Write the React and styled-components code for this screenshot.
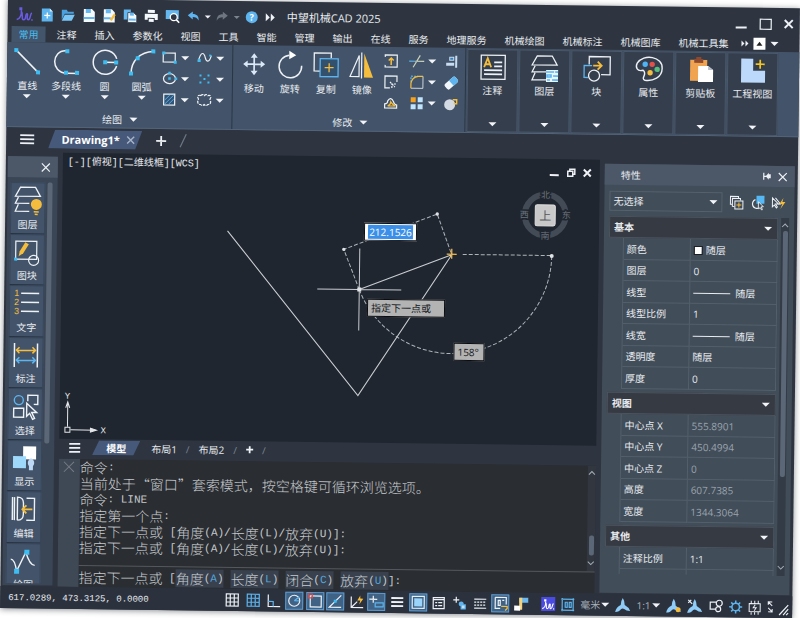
import React, { useState } from 'react';
import styled, { createGlobalStyle, css } from 'styled-components';

const GlobalStyle = createGlobalStyle`
  * {
    box-sizing: border-box;
  }

  body {
    margin: 0;
    background: #fff;
    font-family: 'Open Sans', 'Noto Sans CJK SC', sans-serif;
    font-size: 10px;
    line-height: 14px;
    color: #e8ebef;
  }

  #root {
    display: flow-root;
    height: 100vh;
    overflow: hidden;
  }

  button,
  input,
  select {
    margin: 0;
    padding: 0;
    border: 0;
    background: none;
    color: inherit;
    font: inherit;
  }

  svg {
    display: block;
    flex: none;
    overflow: visible;
  }
`;

const blue = '#3dbdf2';
const sky = '#5db4ee';
const gold = '#f5bd3d';
const white = '#eef2f6';

/* ---------- shell ---------- */

const Window = styled.main`
  display: flex;
  flex-direction: column;
  width: calc(100vw - 8px);
  height: calc(100vh - 8px);
  margin: -2px 0 0 8px;
  background: #2e3540;
  box-shadow: 0 1px 6px #8a8d92;
  transform: rotate(0.74deg);
  transform-origin: 0 0;
`;

const Row = styled.div`
  display: flex;
  align-items: center;
`;

const IconButton = styled.button`
  display: flex;
  align-items: center;
  justify-content: center;
`;

const Caret = styled.i`
  flex: none;
  width: 0;
  height: 0;
  margin: ${({ $small }) => ($small ? '0 -2px' : 0)};
  border: solid transparent;
  border-width: ${({ $small }) => ($small ? '3px 3px 0' : '4px 4px 0')};
  border-top-color: ${({ color }) => color || '#f2f4f7'};
`;

/* ---------- title bar ---------- */

const TitleBar = styled.header`
  display: flex;
  align-items: center;
  flex: none;
  height: 28px;
  padding: 4px 7px 0 9px;
`;

const QuickAccess = styled(Row)`
  gap: 8px;
`;

const Title = styled.h1`
  margin: 0 auto 0 12px;
  font-size: 11px;
  font-weight: 400;
  line-height: 16px;
`;

const WindowButtons = styled(Row)`
  gap: 13px;
`;

/* ---------- ribbon ---------- */

const RibbonTabs = styled.nav`
  display: flex;
  flex: none;
  align-items: center;
  height: 16px;
  padding-left: 2px;
`;

const RibbonTab = styled.button`
  flex: none;
  height: 16px;
  margin: 0 2px;
  padding: 0 7px;
  line-height: 15px;
  ${({ $active }) =>
    $active &&
    css`
      background: #43556b;
      color: #45bdf0;
    `}
`;

const RibbonToggles = styled(Row)`
  gap: 5px;
  margin-left: 4px;
`;

const ToggleBox = styled.button`
  display: flex;
  align-items: center;
  justify-content: center;
  width: 12px;
  height: 12px;
  background: #fff;
`;

const Ribbon = styled.section`
  display: flex;
  flex: none;
  height: 85px;
  background: #43546a;
  border-bottom: 1px solid #526379;
`;

const RibbonGroup = styled.div`
  display: flex;
  flex-direction: column;
  justify-content: space-between;
  width: ${({ $width }) => $width}px;
  padding: ${({ $inset }) => `6px 0 1px ${$inset}px`};
  border-right: 1px solid #2b3644;
`;

const Tools = styled.div`
  display: flex;
  align-items: flex-start;
`;

const Tool = styled.button`
  display: flex;
  flex-direction: column;
  align-items: center;
  width: ${({ $wide }) => ($wide ? 40 : 36)}px;
  white-space: nowrap;

  span {
    margin: 4px 0 2px;
  }
`;

const SmallTools = styled.div`
  display: grid;
  grid-template-columns: ${({ $columns }) => $columns};
  grid-auto-rows: 21px;
  margin: -3px 0 0 ${({ $left }) => $left}px;
`;

const SmallTool = styled.button`
  display: flex;
  align-items: center;
  gap: 4px;
`;

const GroupTitle = styled.button`
  display: flex;
  align-items: center;
  justify-content: center;
  gap: 7px;
`;

const Card = styled.button`
  display: flex;
  flex-direction: column;
  align-items: center;
  width: 51px;
  margin: 1px 0 0 1px;
  padding: 4px 0 5px;
  background: #343e4d;
  border: 1px solid #4a586b;
  white-space: nowrap;

  span {
    margin: 3px 0 auto;
  }
`;

/* ---------- tabs ---------- */

const DocTabs = styled.nav`
  display: flex;
  align-items: center;
  flex: none;
  gap: 14px;
  height: 25px;
  padding: 0 0 2px 14px;
`;

const SlantTab = styled.div`
  display: flex;
  align-items: center;
  justify-content: center;
  gap: 7px;
  width: ${({ $width }) => $width}px;
  height: ${({ $height }) => $height}px;
  background: #46597b;
  clip-path: polygon(7px 0, 100% 0, calc(100% - 7px) 100%, 0 100%);
  color: #fff;
  font-weight: 700;
`;

const DocName = styled.button`
  padding-left: 5px;
  font-size: 11px;
`;

const LayoutTabs = styled.nav`
  display: flex;
  align-items: center;
  flex: none;
  gap: 9px;
  height: 20px;
  padding: 0 10px 3px;

  ${SlantTab} {
    margin: 0 2px 0 3px;
  }
`;

const Slash = styled.span`
  color: #7b8592;
`;

/* ---------- body ---------- */

const Body = styled.div`
  display: flex;
  flex: 1;
  min-height: 0;
`;

const PanelHead = styled.div`
  display: flex;
  align-items: center;
  justify-content: flex-end;
  flex: none;
  gap: 7px;
  height: 21px;
  padding: ${({ $pad }) => $pad};
  background: #4c5767;

  h2 {
    margin: 0 auto 0 0;
    font-size: 10px;
    font-weight: 400;
  }
`;

const SidePanel = styled.aside`
  display: flex;
  flex-direction: column;
  flex: none;
  width: 50px;
  margin: 4px 5px 1px 2px;
  background: #3a4655;
`;

const SideScroll = styled.div`
  display: flex;
  flex: 1;
  min-height: 0;
  padding: 5px 5px 2px 3px;
  gap: 2px;
`;

const SideList = styled.div`
  flex: 1;
  overflow: hidden;
  background: #43546a;
`;

const SideItem = styled.button`
  display: flex;
  flex-direction: column;
  align-items: center;
  justify-content: space-between;
  width: 100%;
  height: 51px;
  padding: 3px 0 2px;
  border: 1px solid #37465a;
  border-bottom-color: #283341;

  &:nth-child(odd) {
    height: 52px;
  }
`;

const Thumb = styled.div`
  flex: none;
  width: 5px;
  height: ${({ $height }) => $height};
  background: #5b6776;
  border-radius: 2px;
`;

const Center = styled.div`
  display: flex;
  flex: 1;
  flex-direction: column;
  min-width: 0;
`;

/* ---------- drawing area ---------- */

const Canvas = styled.section`
  position: relative;
  flex: 1;
  min-height: 0;
  margin-right: 3px;
  overflow: hidden;
  background: #20262f;
`;

const Scene = styled.svg`
  position: absolute;
  inset: 0;
`;

const ViewLabel = styled.div`
  position: absolute;
  top: 3px;
  left: 5px;
  font-family: 'Liberation Mono', 'Noto Sans CJK SC', monospace;
`;

const ViewButtons = styled(Row)`
  position: absolute;
  top: 9px;
  right: 9px;
  gap: 8px;
`;

const DistanceBox = styled.label`
  position: absolute;
  left: 302px;
  top: 66px;
  width: 53px;
  height: 18px;
  padding: 1px 3px;
  background: #fff;
  border: 1px solid #0c0f13;

  input {
    display: block;
    width: 100%;
    height: 14px;
    background: #3b8fe8;
    color: #fff;
    text-align: center;
  }
`;

const Hint = styled.div`
  position: absolute;
  left: ${({ $left }) => $left}px;
  top: ${({ $top }) => $top}px;
  width: ${({ $width }) => $width}px;
  height: 18px;
  padding: 1px 3px;
  background: #b3b3b3;
  border: 1px solid #0a0c0f;
  color: #15181c;
`;

/* ---------- command line ---------- */

const Command = styled.section`
  display: flex;
  flex: none;
  height: 128px;
  margin-right: 3px;
  background: #2a2d31;
  color: #c6cacf;
  font-family: 'Noto Sans CJK SC', sans-serif;
  font-size: 14px;
  font-weight: 300;
`;

const CommandStrip = styled.div`
  flex: none;
  width: 21px;
  padding: 3px 5px;
  background: #3f4855;
`;

const CommandBody = styled.div`
  display: flex;
  flex: 1;
  flex-direction: column;
  min-width: 0;
`;

const History = styled.div`
  display: flex;
  flex: 1;
  justify-content: space-between;
  min-height: 0;
  line-height: 16px;
  white-space: nowrap;

  p {
    display: flex;
    align-items: center;
    height: 16px;
    margin: 0;
  }
`;

const Mono = styled.span`
  font-family: 'Liberation Mono', monospace;
  font-size: 11px;
  font-weight: 400;
  white-space: pre;
`;

const Prompt = styled.label`
  display: flex;
  align-items: center;
  flex: none;
  height: 22px;
  border-top: 1px solid #55595f;
  line-height: 18px;
  white-space: nowrap;

  input {
    flex: 1;
    min-width: 0;
    outline: none;
  }
`;

const Option = styled.button`
  display: flex;
  align-items: center;
  height: 18px;
  margin-right: ${({ $last }) => ($last ? 0 : 7)}px;
  background: #38414d;
  line-height: 18px;

  b {
    color: #53a4dd;
    font-weight: 400;
  }
`;

const ScrollTrack = styled.div`
  display: flex;
  flex: none;
  flex-direction: column;
  align-items: center;
  gap: 6px;
  width: 8px;
  padding: 6px 0;
  background: #31363f;

  :first-child {
    margin-bottom: auto;
  }
`;

/* ---------- properties ---------- */

const Properties = styled.aside`
  display: flex;
  flex-direction: column;
  flex: none;
  width: 190px;
  margin: 4px 3px 1px 2px;
  background: #414d59;
`;

const Picker = styled(Row)`
  flex: none;
  gap: 7px;
  padding: 6px 9px 5px 5px;
`;

const SelectBox = styled.label`
  display: flex;
  align-items: center;
  flex: 1;
  height: 20px;
  padding: 0 4px 0 3px;
  border: 1px solid #55616d;

  select {
    flex: 1;
    appearance: none;
  }
`;

const PropScroll = styled.div`
  display: flex;
  flex: 1;
  min-height: 0;
  gap: 3px;
  margin: 0 5px 19px;
`;

const PropGroups = styled.div`
  flex: 1;
  overflow: hidden;
`;

const GroupHead = styled.button`
  display: flex;
  align-items: center;
  justify-content: space-between;
  width: 100%;
  height: 22px;
  padding: 0 5px 0 4px;
  background: #363a42;
  border: 1px solid #4b535e;
  font-weight: 700;
`;

const PropTable = styled.table`
  width: calc(100% - 14px);
  margin: 0 0 3px 14px;
  border-collapse: separate;
  border-spacing: 0;
  border-left: 1px solid #53606c;
  table-layout: fixed;

  tr {
    height: 21px;
  }

  tr:nth-child(odd) {
    height: 22px;
  }

  th,
  td {
    padding: 0 3px;
    border: solid #53606c;
    border-width: 0 1px 1px 0;
    font-weight: 400;
    text-align: left;
  }

  th {
    width: 67px;
  }

  td {
    color: ${({ $muted }) => ($muted ? '#9aa3ad' : 'inherit')};
  }
`;

const Swatch = styled.i`
  display: inline-block;
  width: 7px;
  height: 7px;
  margin: 0 4px 0 1px;
  background: #fff;
  outline: 1px solid #1c2026;
`;

const Stroke = styled.i`
  display: inline-block;
  width: 37px;
  height: 1px;
  margin-right: 5px;
  background: #e8ebef;
  vertical-align: middle;
`;

const PropTrack = styled.div`
  display: flex;
  flex: none;
  flex-direction: column;
  align-items: center;
  gap: 3px;
  width: 8px;
  padding: 6px 0;
  background: #333b46;

  :last-child {
    margin-top: auto;
  }
`;

/* ---------- status bar ---------- */

const StatusBar = styled.footer`
  display: flex;
  align-items: center;
  flex: none;
  height: 22px;
  padding: 0 2px 0 8px;
  background: #2b323e;
`;

const Coords = styled.output`
  flex: none;
  width: 215px;
  padding-top: 2px;
  font-family: 'Liberation Mono', monospace;
  font-size: 9px;
  white-space: pre;
`;

const Modes = styled(Row)`
  flex: 0 0 307px;
  justify-content: space-between;
`;

const Mode = styled.button`
  display: flex;
  align-items: center;
  justify-content: center;
  width: 18px;
  height: 18px;
  ${({ $on }) =>
    $on &&
    css`
      background: #3f6285;
      border: 1px solid #5c9bd0;
    `}
`;

const StatusEnd = styled(Row)`
  flex: 1;
  justify-content: space-between;
  margin: 0 2px 0 11px;
`;

const StatusSelect = styled.label`
  display: flex;
  align-items: center;
  gap: 1px;
  color: #a9b1ba;

  select {
    appearance: none;
  }
`;

const AppBadge = styled(IconButton)`
  width: 14px;
  height: 14px;
  background: #4a4be0;
`;

/* ---------- drawings ---------- */

const Icon = ({ w = 16, h = w, children, stroke = white, sw = 1.2 }) => (
  <svg
    width={w}
    height={h}
    viewBox={`0 0 ${w} ${h}`}
    fill="none"
    stroke={stroke}
    strokeWidth={sw}
    aria-hidden="true"
  >
    {children}
  </svg>
);

const Dot = ({ x, y, s = 4 }) => (
  <rect x={x - s / 2} y={y - s / 2} width={s} height={s} fill={blue} stroke="none" />
);

const Close = ({ size = 8, color = white, sw = 1.4 }) => (
  <Icon w={size} stroke={color} sw={sw}>
    <path d={`M0 0L${size} ${size}M${size} 0L0 ${size}`} />
  </Icon>
);

const Plus = ({ size = 10 }) => (
  <Icon w={size} sw={1.8}>
    <path d={`M0 ${size / 2}H${size}M${size / 2} 0V${size}`} />
  </Icon>
);

const Menu = ({ w = 14 }) => (
  <Icon w={w} h={10} sw={1.8}>
    <path d={`M0 1H${w}M0 5H${w}M0 9H${w}`} />
  </Icon>
);

const Chevron = ({ down }) => (
  <Icon w={6} h={4} stroke="#a4adb7" sw={1}>
    <path d={down ? 'M0 0l3 3 3-3' : 'M0 3l3-3 3 3'} />
  </Icon>
);

const Logo = ({ color = '#6a5be0', w = 16, h = 14 }) => (
  <svg width={w} height={h} viewBox="0 0 16 14" fill="none" stroke={color} strokeWidth="1.5">
    <path d="M0 12.500C3 12 5 8 4.500 3M4.500 4C7 7 4 12.500 7 12.500S8 7 10 6.500s-1 6 1.500 6S13 7 15 5.500" />
    <path d="M2.500 0h3v3h-3zM14.500 12h1.500v1.500h-1.500z" fill={color} stroke="none" />
  </svg>
);

const quickIcons = {
  新建: (
    <Icon w={13} stroke="none">
      <path d="M1 0h8l3 3v10H1z" fill={sky} />
      <path d="M9 0v3h3z" fill="#d6edfc" />
      <path d="M6.500 4v6M3.500 7h6" stroke="#fff" strokeWidth="1.300" />
    </Icon>
  ),
  打开: (
    <Icon w={13} stroke="none">
      <path d="M0 1h5l1 2h6v2H3l-3 6z" fill="#4ba1dd" />
      <path d="M3 6h10l-3 6H0z" fill="#79c6f7" />
    </Icon>
  ),
  保存: (
    <Icon w={12} h={13} stroke="none">
      <path d="M1 0h8l3 3v10H1z" fill="#f4f9fd" />
      <path d="M3 0h5v4H3zM1 8h11v2H1z" fill="#65b8ef" />
    </Icon>
  ),
  另存为: (
    <Icon w={13} stroke="none">
      <path d="M1 0h8l3 3v10H1z" fill="#f4f9fd" />
      <path d="M3 0h5v4H3zM1 8h7v2H1z" fill="#65b8ef" />
      <path d="M8 11l4-6" stroke={gold} strokeWidth="2.400" />
    </Icon>
  ),
  全部保存: (
    <Icon w={13} stroke="none">
      <path d="M0 0h7v10H0z" fill="#65b8ef" />
      <path d="M4 3h6l3 3v7H4z" fill="#f4f9fd" stroke="#2e3540" strokeWidth=".8" />
      <path d="M6 3h4v3H6zM5 9h7v2H5z" fill="#65b8ef" />
    </Icon>
  ),
  打印: (
    <Icon w={13} stroke="none">
      <path d="M3 0h7v3H3zM0 4h13v6h-3V8H3v2H0z" fill="#f4f9fd" />
      <path d="M4 9h5v3H4z" fill="#f4f9fd" />
    </Icon>
  ),
  预览: (
    <Icon w={14} h={13} stroke="none">
      <path d="M0 0h13v9H0z" fill="#65b8ef" />
      <circle cx="8" cy="7" r="3.500" fill="#2e3540" stroke="#fff" strokeWidth="1.300" />
      <path d="M10.500 9.500l3 3" stroke="#fff" strokeWidth="1.600" />
    </Icon>
  ),
};

const Undo = ({ color, flip }) => (
  <svg width="11" height="10" viewBox="0 0 11 10" fill={color}>
    <path
      d="M0 4l5-4v2.600c4 0 6 2 6 6.400C9.500 6.500 8 5.600 5 5.600V8z"
      transform={flip ? 'translate(11 0) scale(-1 1)' : undefined}
    />
  </svg>
);

const LineIcon = () => (
  <Icon w={26} sw={1.5}>
    <path d="M2 2L24 24" />
    <Dot x={2} y={2} />
    <Dot x={24} y={24} />
  </Icon>
);

const PolylineIcon = () => (
  <Icon w={26} sw={1.5}>
    <path d="M14 2C5 1 1.500 8 1.500 13S5 24.500 14 24.500H25" />
    <Dot x={14} y={2.5} />
    <Dot x={13} y={24} />
    <Dot x={24} y={24} />
  </Icon>
);

const CircleIcon = () => (
  <Icon w={26} sw={1.5}>
    <path d="M24.500 9.500A12 12 0 1 0 24.500 16.500" />
    <path d="M13 13h12" />
    <Dot x={13} y={13} />
    <Dot x={24} y={13} />
  </Icon>
);

const ArcIcon = () => (
  <Icon w={26} sw={1.5}>
    <path d="M2 24C2 11 11 2 24 1.500" />
    <Dot x={2} y={24} />
    <Dot x={8.5} y={8.5} />
    <Dot x={24} y={1.5} />
  </Icon>
);

const MoveIcon = () => (
  <Icon w={26} sw={1.7} stroke="#dbe8f8">
    <path d="M13 4v18M4 13h18" />
    <path
      d="M13 2l3.500 4.500h-7zM13 24l3.500-4.500h-7zM2 13l4.500-3.500v7zM24 13l-4.500-3.500v7z"
      fill="#dbe8f8"
      stroke="none"
    />
  </Icon>
);

const RotateIcon = () => (
  <Icon w={26} sw={1.5}>
    <path d="M12 3.500A11.300 11.300 0 1 0 24.500 14" />
    <path d="M12-1l7 4.500-7 4z" fill="#fff" stroke="none" />
  </Icon>
);

const CopyIcon = () => (
  <Icon w={26} sw={1.3}>
    <path d="M7 19H1V1h17v5" />
    <rect x="7" y="6.500" width="18" height="18" stroke={sky} fill="#33506d" />
    <path d="M16 11v9M11.500 15.500h9" stroke={gold} />
  </Icon>
);

const MirrorIcon = () => (
  <Icon w={26}>
    <path d="M10 3v21H1z" />
    <path d="M12.500 0v26" />
    <path d="M15 1v24h9z" fill={gold} stroke="none" />
  </Icon>
);

const drawSmall = [
  <Icon w={15} key="rect">
    <rect x="1" y="3" width="12" height="9" />
    <Dot x={1.5} y={3} s={3} />
    <Dot x={13} y={12} s={3} />
  </Icon>,
  <Icon w={15} key="spline">
    <path d="M1 11C4-1 7 3 8 7s4 6 6-2" />
    <Dot x={2} y={10} s={3} />
    <Dot x={13} y={5} s={2} />
  </Icon>,
  <Icon w={15} key="ellipse">
    <ellipse cx="7.500" cy="7.500" rx="6" ry="5" />
    <Dot x={7.5} y={7.5} s={2.5} />
    <Dot x={14} y={7.5} s={2.5} />
    <Dot x={7.5} y={2} s={2.5} />
  </Icon>,
  <Icon w={15} key="points">
    <Dot x={3.5} y={4} s={2} />
    <Dot x={11.5} y={4} s={2} />
    <Dot x={7.5} y={7.5} s={2} />
    <Dot x={3.5} y={11} s={2} />
    <Dot x={11.5} y={11} s={2} />
  </Icon>,
  <Icon w={15} key="hatch">
    <rect x="2" y="2" width="11" height="11" fill="#315477" />
    <path d="M3 8l5-5M3 12l9-9M7 12l5-5" stroke={sky} strokeWidth=".9" />
  </Icon>,
  <Icon w={15} key="cloud">
    <path
      d="M4 3q2-2 3.500 0 2-2 3.500 0 3-1 3 2-1.500 2 0 4 0 3-3 3-1.500 2-3.500 0-2 2-3.500 0-3 0-3-3 1.500-2 0-4 0-3 3-2z"
      strokeDasharray="3 1"
    />
  </Icon>,
];

const modifySmall = [
  <Icon w={14} key="stretch">
    <path d="M1 3V1h12v12H1v-2" />
    <path d="M7 11V4M4.500 6.500L7 4l2.500 2.500" stroke={gold} strokeWidth="1.500" />
  </Icon>,
  <Icon w={15} key="trim">
    <path d="M0 8h6" stroke={sky} />
    <path d="M6 8h9M11 2L4 14" stroke="#c9d3bb" />
  </Icon>,
  <Icon w={14} key="align" stroke="none">
    <path d="M11 1h2v12h-2zM5 2h5v4H5zM2 8h8v3H2z" fill="#c8dcf2" />
    <path d="M6 3h3v2H6z" fill="#377fb9" />
  </Icon>,
  <Icon w={14} key="scale">
    <path d="M6 13H1V1h12v6" />
    <path d="M6 7l5 5M8 13v-4h5" strokeDasharray="2 1" />
  </Icon>,
  <Icon w={15} key="fillet">
    <path d="M2 8V2h7" stroke={sky} strokeDasharray="2 1" />
    <path d="M2 14h12V2" strokeWidth=".8" />
    <path d="M2 14V9Q3 3 9 2h5" stroke={gold} />
  </Icon>,
  <Icon w={14} key="erase" stroke="none">
    <g transform="rotate(-42 7 7)">
      <rect x="0" y="4" width="14" height="7" rx="2" fill="#f1f6fb" />
      <path d="M7 4h5q2 0 2 2v3q0 2-2 2H7z" fill={sky} />
    </g>
  </Icon>,
  <Icon w={14} key="offset">
    <path d="M1 12V8q3 0 3-3 3-5 6 1 0 2 3 3v3z" />
    <path d="M4 10q3-1 3-4 2 3 5 4z" stroke={gold} fill="#6b5b34" />
  </Icon>,
  <Icon w={15} key="array" stroke="none">
    <path d="M2 2h5v5H2z" fill="#f6a21c" />
    <path d="M9 2h5v5H9zM2 9h5v5H2zM9 9h5v5H9z" fill="#bfe4fb" />
  </Icon>,
  <Icon w={14} key="explode" stroke="none">
    <circle cx="6" cy="8" r="5.500" fill="#d4dae3" />
    <path d="M9 3h4v4h-3" stroke={gold} strokeWidth="1.400" />
  </Icon>,
];

const LayerStack = ({ h = 26, children }) => (
  <Icon w={28} h={h} sw={1.3}>
    <path d="M6 1h15l5 9H1z" fill="none" />
    <path d="M4 11l-3 6h14M4 18l-3 7h14" />
    {children}
  </Icon>
);

const cards = [
  [
    '注释',
    <Icon w={26} key="note" sw={1.3}>
      <rect x="1" y="1" width="24" height="24" />
      <path d="M4 13L7.500 4 11 13M5.500 10h4" stroke={gold} strokeWidth="1.800" />
      <path d="M14 8h8M14 12h8M4 16h18M4 20h18" strokeWidth="1.700" />
    </Icon>,
  ],
  [
    '图层',
    <LayerStack key="layers">
      <rect x="15" y="15" width="12" height="12" fill="#e9f6fe" stroke="none" />
      <path d="M15 17h8M24 17h3M16 20h4v2h-4zM22 21h5M16 25h3M21 25h6" stroke={sky} strokeWidth="1.600" />
    </LayerStack>,
  ],
  [
    '块',
    <Icon w={28} h={26} key="block" sw={1.3}>
      <path d="M6 9V1h21v18h-9" />
      <path d="M9 10H1v12h4" stroke={sky} />
      <circle cx="11" cy="20" r="5.500" />
      <path d="M10 10h8M14.500 6l4 4-4 4" stroke={gold} strokeWidth="1.800" />
    </Icon>,
  ],
  [
    '属性',
    <Icon w={28} h={26} key="palette" sw={1.4}>
      <path d="M8 14C2 16 0 11 2 7 8-3 28 0 27 12c0 9-9 13-17 12-5-2 3-6-2-10z" />
      <g stroke="none">
        <circle cx="10" cy="8" r="2.700" fill="#4fb4f4" />
        <circle cx="17" cy="8" r="2.700" fill="#e1514c" />
        <circle cx="22" cy="13" r="2.700" fill="#58bd7f" />
        <circle cx="15" cy="16.500" r="2.700" fill={gold} />
      </g>
    </Icon>,
  ],
  [
    '剪贴板',
    <Icon w={26} key="paste" stroke="none">
      <path d="M2 3h17v21H2z" fill="#f0a452" />
      <path d="M6 2h2V0h5v2h2v4H6z" fill="#8e4a2f" />
      <path d="M10 9h10l5 4v12H10z" fill="#fff" />
      <path d="M20 9v4h5z" fill="#b7bdc6" />
    </Icon>,
  ],
  [
    '工程视图',
    <Icon w={26} key="view" stroke="none">
      <path d="M1 1h12v12h12v12H1z" fill="#bcd9fb" />
      <path d="M20 2v9M15.500 6.500h9" stroke="#f3c522" strokeWidth="1.700" />
    </Icon>,
  ],
];

const sideItems = [
  [
    '图层',
    <LayerStack key="l" h={28}>
      <circle cx="22" cy="18" r="5.500" fill={gold} stroke="none" />
      <path d="M19.500 25.500h5M20.500 28h3" stroke={gold} strokeWidth="1.500" />
    </LayerStack>,
  ],
  [
    '图块',
    <Icon w={28} h={28} key="b">
      <path d="M2 21V3h21v18z" />
      <path d="M5 18l1-5 5.500-9 3.500 2-5.500 9z" fill={gold} stroke="none" />
      <circle cx="20" cy="22" r="5" />
      <Dot x={2} y={21} s={3} />
    </Icon>,
  ],
  [
    '文字',
    <Icon w={28} h={28} key="t" sw={1.5}>
      <path d="M8 4h18M8 13h18M8 22h18" />
      <g fill={gold} stroke="none" fontSize="9" fontFamily="Liberation Sans, sans-serif">
        <text x="1" y="7">1</text>
        <text x="1" y="16">2</text>
        <text x="1" y="25">3</text>
      </g>
    </Icon>,
  ],
  [
    '标注',
    <Icon w={28} h={28} key="d" sw={1.5}>
      <path d="M2 2v24M25 2v24" />
      <path d="M4 9h19M7 6L4 9l3 3M20 6l3 3-3 3" stroke={gold} />
      <path d="M4 19h19M7 16l-3 3 3 3M20 16l3 3-3 3" stroke={sky} />
    </Icon>,
  ],
  [
    '选择',
    <Icon w={28} h={28} key="s" sw={1.4}>
      <circle cx="7" cy="8" r="4.500" stroke={sky} />
      <path d="M2 16h10v9H2zM16 9V3h10v9h-4" />
      <path d="M15 11l10 9h-5l3 6-2 1-3-6-3 3z" fill="#43546a" />
    </Icon>,
  ],
  [
    '显示',
    <Icon w={28} h={28} key="v" stroke="none">
      <path d="M12 2h13v13H12z" fill="#fff" />
      <path d="M2 12h13v12H2z" fill="#9ed8fb" />
      <path d="M20 14a5 5 0 0 1 2 8v4h-4v-4a5 5 0 0 1 2-8z" fill="#bcd8f4" />
    </Icon>,
  ],
  [
    '编辑',
    <Icon w={28} h={28} key="e" sw={1.4}>
      <path d="M2 2v23M4 2v23M7 25V2q6 0 6 6v11q0 6-6 6M16 3h8v22h-8" />
      <path d="M22 14h-9M16 10l-4 4 4 4" stroke={gold} strokeWidth="1.800" />
    </Icon>,
  ],
  [
    '绘图',
    <Icon w={28} h={28} key="g" sw={1.4}>
      <path d="M1 12q4 0 6 12l9-19q4 13 9 13" />
      <Dot x={7} y={24} s={5} />
      <Dot x={17} y={5} s={5} />
    </Icon>,
  ],
];

const modes = [
  ['栅格', false, <path key="p" d="M1 1h12v12H1zM1 5h12M1 9h12M5 1v12M9 1v12" />],
  ['捕捉', false, <path key="p" d="M1 1h12v12H1zM1 5h12M1 9h12M5 1v12M9 1v12" stroke={sky} />],
  ['正交', false, <g key="p"><path d="M2 1v12h12" /><path d="M2 8h5v5" stroke={sky} /></g>],
  ['极轴', true, <g key="p"><circle cx="7" cy="7" r="5.500" /><path d="M7 7l5-4M7 7h5" stroke={sky} /></g>],
  ['对象捕捉', true, <g key="p"><path d="M2 2h11v11H2z" /><path d="M0 0h4v4H0z" stroke="#e04a48" /></g>],
  ['追踪', true, <g key="p"><path d="M13 1L1 13h12" /><Dot x={7} y={7} s={3} /></g>],
  ['动态坐标', false, <g key="p"><path d="M2 2v11h12M2 13l6-6" /><path d="M11 1L8 6h3l-1 4 4-6h-3z" fill={gold} stroke="none" /></g>],
  ['动态输入', true, <g key="p"><path d="M4 1v7M0 4.500h8" /><path d="M6 8h8v4H6z" stroke={sky} /></g>],
  ['线宽', false, <path key="p" d="M1 3h12M1 7h12M1 11h12" strokeWidth="1.800" />],
  ['透明度', true, <g key="p"><path d="M1 1h12v12H1z" stroke="#e3f1fb" /><path d="M3 3h8v8H3z" fill="#9ad4fb" stroke="none" /></g>],
  ['快捷特性', false, <path key="p" d="M2 2h11v11H2zM2 4h11M4 7h2M7 7h4M4 10h2M7 10h4" />],
  ['循环选择', false, <g key="p"><path d="M4 1v6M1 4h6" /><circle cx="9" cy="8" r="2.500" fill={sky} stroke="none" /><path d="M9 9h4v4H9z" fill="#bfe0f7" stroke={sky} /></g>],
  ['线型显示', false, <g key="p"><path d="M1 3h12M1 12h12" /><path d="M1 6h12M1 9h12" strokeDasharray="2 1" /></g>],
  ['注释监视', true, <g key="p"><path d="M2 1h11v7M2 1v11h5M5 4h2v5H5zM9 4h2" /><path d="M8 10h6v2l-2 2" stroke={gold} /></g>],
  ['工作空间', false, <g key="p" stroke="none"><path d="M5 1h9v5H5z" fill="#6db9ed" /><path d="M5 1h3v12H5z" fill="#f4d27c" /><path d="M0 9h6v5H0z" fill="#fff" /></g>],
];

const Blade = ({ children }) => (
  <Icon w={15} h={15} stroke="none">
    <path d="M7.500 0q2 3 2 7 4 2 5.500 6-4 0-6-2-1.500-1-3 0-2 3-6 3 1-5 5.500-7 0-4 2-7z" fill="#8fcdf8" />
    {children}
  </Icon>
);

/* ---------- sections ---------- */

const tabs = [
  '常用', '注释', '插入', '参数化', '视图', '工具', '智能', '管理', '输出', '在线', '服务',
  '地理服务', '机械绘图', '机械标注', '机械图库', '机械工具集',
];

const history = [
  ['命令', ':'],
  ['当前处于“窗口”套索模式，按空格键可循环浏览选项。'],
  ['命令', ': LINE'],
  ['指定第一个点', ':'],
  ['指定下一点或', ' [', '角度', '(A)/', '长度', '(L)/', '放弃', '(U)]:'],
  ['指定下一点或', ' [', '角度', '(A)/', '长度', '(L)/', '放弃', '(U)]:'],
];

const options = [['角度', 'A'], ['长度', 'L'], ['闭合', 'C'], ['放弃', 'U']];

const groups = [
  {
    name: '基本',
    rows: [
      ['颜色', <React.Fragment key="c"><Swatch />随层</React.Fragment>],
      ['图层', '0'],
      ['线型', <React.Fragment key="l"><Stroke />随层</React.Fragment>],
      ['线型比例', '1'],
      ['线宽', <React.Fragment key="w"><Stroke />随层</React.Fragment>],
      ['透明度', '随层'],
      ['厚度', '0'],
    ],
  },
  {
    name: '视图',
    muted: true,
    rows: [
      ['中心点 X', '555.8901'],
      ['中心点 Y', '450.4994'],
      ['中心点 Z', '0'],
      ['高度', '607.7385'],
      ['宽度', '1344.3064'],
    ],
  },
  { name: '其他', rows: [['注释比例', '1:1'], ['', '']] },
];

const Drawing = () => (
  <Scene width="537" height="286" viewBox="0 0 537 286" fill="none" stroke="#c9cdd2">
    <path d="M165.500 76L298 239 390 97 298 133" strokeWidth="1.100" />
    <path d="M256 133h84M298 92v82" />
    <g strokeDasharray="4 2" stroke="#aeb4ba">
      <path d="M298 133L282 93 375 56.500 390 97M401 96.500h89" />
      <path d="M490 97A99.500 99.500 0 0 1 298 133" />
    </g>
    <g fill="#e0e3e6" stroke="none">
      <circle cx="282" cy="93" r="1.700" />
      <circle cx="375" cy="56.500" r="1.700" />
      <circle cx="490" cy="97" r="2" />
      <rect x="296" y="131" width="4" height="4" />
    </g>
    <path d="M385 96.500h10M390 91v10" stroke="#f0b848" strokeWidth="1.300" />

    <circle cx="483" cy="56" r="20.500" stroke="#434b57" strokeWidth="6" />
    <g fill="#6b737e" stroke="#20262f" strokeWidth="3" paintOrder="stroke" fontSize="9" textAnchor="middle">
      <text x="483" y="39">北</text>
      <text x="483" y="80">南</text>
      <text x="462" y="59">西</text>
      <text x="504" y="59">东</text>
    </g>
    <rect x="473" y="46" width="20" height="21" rx="2" fill="#c9c9c9" stroke="#dedede" />
    <text x="483" y="61" fill="#55585c" stroke="none" fontSize="12" textAnchor="middle">上</text>

    <g stroke="#e4e7ea">
      <rect x="5.500" y="274.500" width="5" height="5" />
      <path d="M11 277h24M8 274v-24M6 255l2-6 2 6" />
      <path d="M31 275l6 2-6 2z" fill="#e4e7ea" />
    </g>
    <g fill="#e4e7ea" stroke="none" fontSize="9" fontFamily="Liberation Mono, monospace">
      <text x="5" y="246">Y</text>
      <text x="41" y="280">X</text>
    </g>
  </Scene>
);

const PropGroup = ({ name, rows, muted }) => {
  const [open, setOpen] = useState(true);

  return (
    <section>
      <GroupHead aria-expanded={open} onClick={() => setOpen(!open)}>
        {name}
        <Caret />
      </GroupHead>
      {open && (
        <PropTable $muted={muted}>
          <tbody>
            {rows.map(([label, value], i) => (
              <tr key={i}>
                <th scope="row">{label}</th>
                <td>{value}</td>
              </tr>
            ))}
          </tbody>
        </PropTable>
      )}
    </section>
  );
};

const App = () => {
  const [tab, setTab] = useState('常用');
  const [distance, setDistance] = useState('212.1526');

  return (
    <>
      <GlobalStyle />
      <Window>
        <TitleBar>
          <QuickAccess>
            <Logo />
            {Object.entries(quickIcons).map(([name, icon]) => (
              <IconButton key={name} aria-label={name}>{icon}</IconButton>
            ))}
            <IconButton aria-label="撤销"><Undo color={sky} /></IconButton>
            <Caret $small />
            <IconButton aria-label="重做"><Undo color="#6d7681" flip /></IconButton>
            <Caret $small color="#7b8490" />
            <IconButton aria-label="帮助">
              <Icon w={12} stroke="none">
                <circle cx="6" cy="6" r="6" fill={sky} />
                <text x="6" y="9.500" fill="#fff" fontSize="9" fontWeight="700" textAnchor="middle">?</text>
              </Icon>
            </IconButton>
            <Icon w={9} h={8} stroke="none">
              <path d="M0 0l4 4-4 4zM5 0l4 4-4 4z" fill={white} />
            </Icon>
          </QuickAccess>
          <Title>中望机械CAD 2025</Title>
          <WindowButtons>
            <IconButton aria-label="最小化"><Icon w={11} h={10} sw={2}><path d="M0 9h11" /></Icon></IconButton>
            <IconButton aria-label="最大化"><Icon w={12} h={11}><rect x=".5" y=".5" width="11" height="10" /></Icon></IconButton>
            <IconButton aria-label="关闭"><Close sw={2} /></IconButton>
          </WindowButtons>
        </TitleBar>

        <RibbonTabs>
          {tabs.map(name => (
            <RibbonTab key={name} $active={name === tab} onClick={() => setTab(name)}>
              {name}
            </RibbonTab>
          ))}
          <RibbonToggles>
            <Icon w={7} h={6} stroke="none"><path d="M0 0l3 3-3 3zM4 0l3 3-3 3z" fill={white} /></Icon>
            <ToggleBox aria-label="折叠功能区">
              <Icon w={6} h={4} stroke="none"><path d="M0 4l3-4 3 4z" fill="#222" /></Icon>
            </ToggleBox>
            <Caret />
          </RibbonToggles>
        </RibbonTabs>

        <Ribbon>
          <RibbonGroup $width={226} $inset={1}>
            <Tools>
              <Tool $wide><LineIcon /><span>直线</span><Caret /></Tool>
              <Tool $wide><PolylineIcon /><span>多段线</span><Caret /></Tool>
              <Tool $wide><CircleIcon /><span>圆</span><Caret /></Tool>
              <Tool><ArcIcon /><span>圆弧</span><Caret /></Tool>
              <SmallTools $columns="35px 35px" $left={3}>
                {drawSmall.map((icon, i) => <SmallTool key={i}>{icon}<Caret /></SmallTool>)}
              </SmallTools>
            </Tools>
            <GroupTitle>绘图<Caret /></GroupTitle>
          </RibbonGroup>
          <RibbonGroup $width={233} $inset={3}>
            <Tools>
              <Tool><MoveIcon /><span>移动</span></Tool>
              <Tool><RotateIcon /><span>旋转</span></Tool>
              <Tool><CopyIcon /><span>复制</span></Tool>
              <Tool><MirrorIcon /><span>镜像</span></Tool>
              <SmallTools $columns="25px 35px 15px" $left={4}>
                {modifySmall.map((icon, i) => (
                  <SmallTool key={i}>{icon}{i % 3 === 1 && <Caret />}</SmallTool>
                ))}
              </SmallTools>
            </Tools>
            <GroupTitle>修改<Caret /></GroupTitle>
          </RibbonGroup>
          {cards.map(([name, icon]) => (
            <Card key={name}>{icon}<span>{name}</span><Caret /></Card>
          ))}
        </Ribbon>

        <DocTabs>
          <IconButton aria-label="菜单"><Menu /></IconButton>
          <SlantTab $width={94} $height={19}>
            <DocName>Drawing1*</DocName>
            <IconButton aria-label="关闭图纸"><Close size={7} color="#a7b4c8" /></IconButton>
          </SlantTab>
          <IconButton aria-label="新建图纸"><Plus /></IconButton>
          <Icon w={6} h={13} stroke="#6d7784"><path d="M6 0L0 13" /></Icon>
        </DocTabs>

        <Body>
          <SidePanel>
            <PanelHead $pad="0 8px">
              <IconButton aria-label="关闭面板"><Close sw={1.2} /></IconButton>
            </PanelHead>
            <SideScroll>
              <SideList>
                {sideItems.map(([name, icon]) => <SideItem key={name}>{icon}{name}</SideItem>)}
              </SideList>
              <Thumb $height="65%" />
            </SideScroll>
          </SidePanel>

          <Center>
            <Canvas>
              <Drawing />
              <ViewLabel>[-][俯视][二维线框][WCS]</ViewLabel>
              <ViewButtons>
                <IconButton aria-label="最小化视口"><Icon w={9} h={9} sw={2}><path d="M0 7h9" /></Icon></IconButton>
                <IconButton aria-label="还原视口"><Icon w={9} h={9} sw={1.5}><path d="M1 3h5v5H1zM3 3V1h5v5H6" /></Icon></IconButton>
                <IconButton aria-label="关闭视口"><Close size={7} sw={2} /></IconButton>
              </ViewButtons>
              <DistanceBox>
                <input aria-label="距离" value={distance} onChange={e => setDistance(e.target.value)} />
              </DistanceBox>
              <Hint $left={306} $top={142} $width={78}>指定下一点或</Hint>
              <Hint $left={393} $top={185} $width={31}>158°</Hint>
            </Canvas>

            <LayoutTabs>
              <IconButton aria-label="布局菜单"><Menu w={11} /></IconButton>
              <SlantTab $width={48} $height={15} as="button">模型</SlantTab>
              <button>布局1</button>
              <Slash>/</Slash>
              <button>布局2</button>
              <Slash>/</Slash>
              <IconButton aria-label="新建布局"><Plus size={7} /></IconButton>
              <Slash>/</Slash>
            </LayoutTabs>

            <Command>
              <CommandStrip>
                <IconButton aria-label="关闭命令行"><Close size={10} color="#757c85" sw={1} /></IconButton>
              </CommandStrip>
              <CommandBody>
                <History>
                  <div>
                    {history.map((parts, i) => (
                      <p key={i}>
                        {parts.map((part, j) => (j % 2 ? <Mono key={j}>{part}</Mono> : part))}
                      </p>
                    ))}
                  </div>
                  <ScrollTrack>
                    <Chevron />
                    <Thumb $height="20px" />
                    <Chevron down />
                  </ScrollTrack>
                </History>
                <Prompt>
                  指定下一点或<Mono>{' ['}</Mono>
                  {options.map(([name, key], i) => (
                    <Option key={key} $last={i === options.length - 1}>
                      {name}<Mono>(<b>{key}</b>)</Mono>
                    </Option>
                  ))}
                  <Mono>]:</Mono>
                  <input aria-label="命令" />
                </Prompt>
              </CommandBody>
            </Command>
          </Center>

          <Properties>
            <PanelHead $pad="0 8px 0 16px">
              <h2>特性</h2>
              <IconButton aria-label="自动隐藏">
                <Icon w={9} h={7}><path d="M1 0v7M1 3.500h3" /><path d="M6 0L3 3.500 6 7zM6 1.500h2v4H6z" fill={white} stroke="none" /></Icon>
              </IconButton>
              <IconButton aria-label="关闭特性"><Close sw={1.2} /></IconButton>
            </PanelHead>
            <Picker>
              <SelectBox>
                <select aria-label="选择对象" defaultValue="none"><option value="none">无选择</option></select>
                <Caret />
              </SelectBox>
              <IconButton aria-label="切换选择">
                <Icon w={14} sw={1}><path d="M3 9H1V1h8v2M5 11H3V3h8v2" /><path d="M5.500 5.500h8v8h-8z" /><path d="M7 9.500h5M9.500 7v5" stroke={gold} /></Icon>
              </IconButton>
              <IconButton aria-label="选择对象">
                <Icon w={14}><path d="M6 0h8v8H6z" fill="#55b7f3" stroke="none" /><path d="M5 4a4.500 4.500 0 1 0 4 8" /><path d="M8 6l5 5h-2l1 3-1 0-1-2-2 1z" fill="#414d59" strokeWidth=".9" /></Icon>
              </IconButton>
              <IconButton aria-label="快速选择">
                <Icon w={14} sw={1}><path d="M1 2v9l2-2 2 3 1-1-2-3h3z" /><path d="M4 2l5 6H7" /><path d="M12 2L8 8h3l-2 5 5-7h-3z" fill={gold} stroke="none" /></Icon>
              </IconButton>
            </Picker>
            <PropScroll>
              <PropGroups>
                {groups.map(group => <PropGroup key={group.name} {...group} />)}
              </PropGroups>
              <PropTrack>
                <Chevron />
                <Thumb $height="71%" />
                <Chevron down />
              </PropTrack>
            </PropScroll>
          </Properties>
        </Body>

        <StatusBar>
          <Coords>617.0289, 473.3125, 0.0000</Coords>
          <Modes>
            {modes.map(([name, on, art]) => (
              <Mode key={name} $on={on} aria-label={name} aria-pressed={on}>
                <Icon w={14}>{art}</Icon>
              </Mode>
            ))}
          </Modes>
          <StatusEnd>
            <AppBadge aria-label="机械"><Logo color="#fff" w={12} h={11} /></AppBadge>
            <Icon w={13} stroke={sky}><path d="M0 1h13M0 12h13M1 0v13M12 0v13" /><path d="M4 4h2v5H4zM8 4h2v5H8z" /></Icon>
            <StatusSelect>
              <select aria-label="单位" defaultValue="mm"><option value="mm">毫米</option></select>
              <Caret />
            </StatusSelect>
            <Blade />
            <StatusSelect>
              <select aria-label="注释比例" defaultValue="1"><option value="1">1:1</option></select>
              <Caret />
            </StatusSelect>
            <IconButton aria-label="注释可见性"><Blade><circle cx="12" cy="11" r="2.500" fill={gold} /></Blade></IconButton>
            <IconButton aria-label="自动缩放"><Blade><path d="M1 1l4 4M1 4l3-3" stroke={white} /></Blade></IconButton>
            <IconButton aria-label="隔离对象">
              <Icon w={14}><path d="M7 3H1v7h6" /><circle cx="10" cy="4" r="3" /><circle cx="9" cy="10" r="2.500" /></Icon>
            </IconButton>
            <IconButton aria-label="设置">
              <Icon w={13} stroke={sky} sw={1.5}><circle cx="6.500" cy="6.500" r="3.800" /><path d="M6.500 0v3M6.500 10v3M0 6.500h3M10 6.500h3M2 2l2 2M9 9l2 2M11 2L9 4M4 9l-2 2" /></Icon>
            </IconButton>
            <IconButton aria-label="硬件加速">
              <Icon w={13}><path d="M1 3h11v8H1zM3 0v3M6.500 0v3M10 0v3M3 11v3M6.500 11v3M10 11v3M7 4L5 7h3l-2 3" strokeWidth="1" /></Icon>
            </IconButton>
            <IconButton aria-label="全屏">
              <Icon w={6} h={12} sw={1}><path d="M1 4V1h4M1 1l4 4M5 8v3H1M5 11L1 7" /></Icon>
            </IconButton>
            <Icon w={9} h={14}><path d="M0 15L9 5M4 15l5-6M7 15l2-2" /></Icon>
          </StatusEnd>
        </StatusBar>
      </Window>
    </>
  );
};

export default App;
